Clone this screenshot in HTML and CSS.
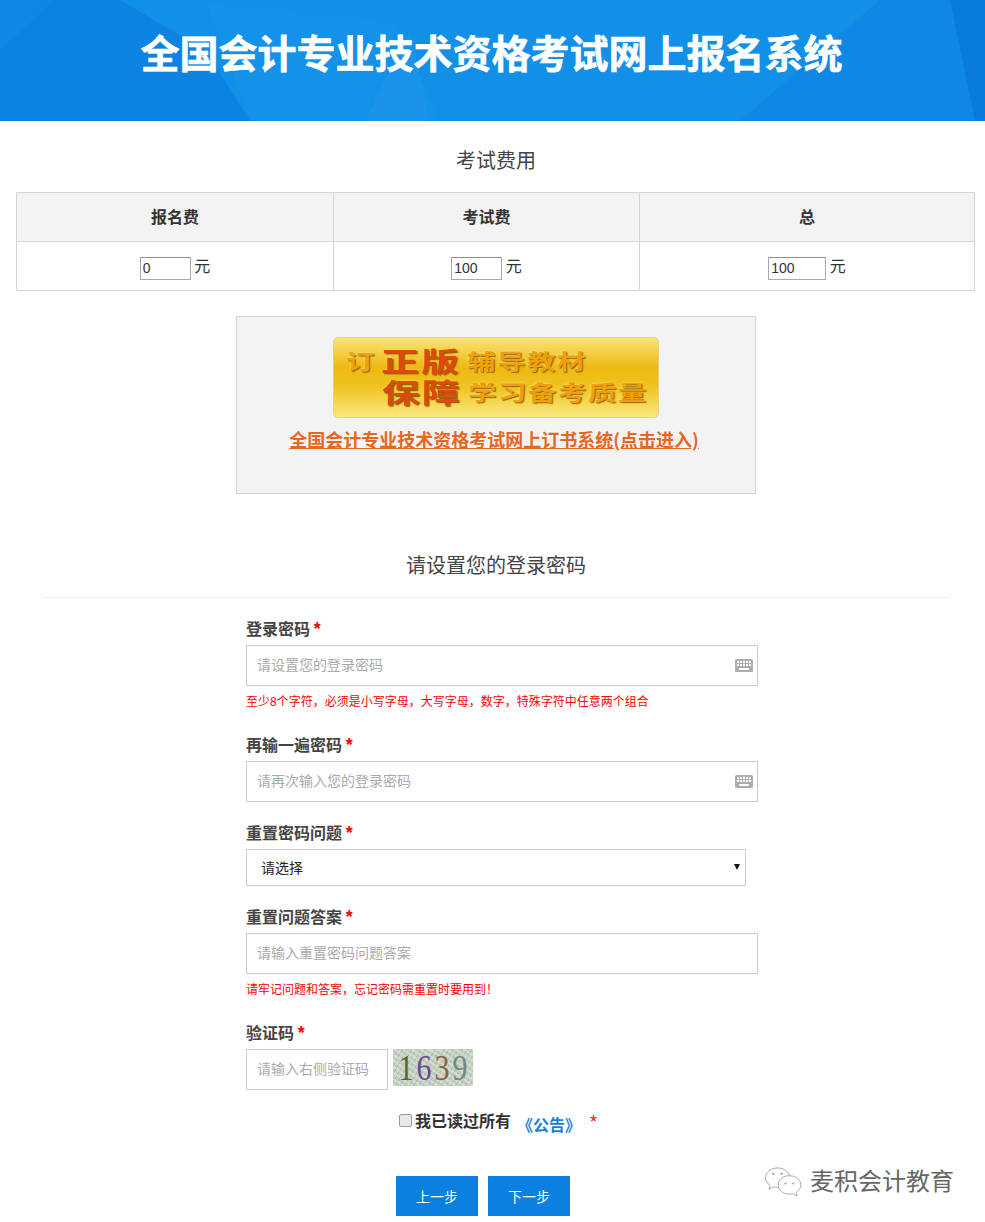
FILE: index.html
```html
<!DOCTYPE html>
<html lang="zh-CN">
<head>
<meta charset="utf-8">
<title>全国会计专业技术资格考试网上报名系统</title>
<link rel="stylesheet" href="styles.css">
</head>
<body>
<header class="banner">
  <svg class="banner-art" viewBox="0 0 985 121" preserveAspectRatio="none" aria-hidden="true">
    <polygon points="0,0 205,0 250,121 0,121" fill="#0c83e3"/>
    <polygon points="120,0 420,0 395,45 365,121 250,121 205,50" fill="#1190e8"/>
    <polygon points="205,0 395,20 440,121 250,121" fill="#1592e9" opacity=".7"/>
    <polygon points="365,121 410,30 430,121" fill="#2a9fee" opacity=".25"/>
    <polygon points="740,121 880,0 950,0 985,121" fill="#0f87e5"/>
    <polygon points="950,0 985,0 985,121 975,121" fill="#0a7bde"/>
    <polygon points="0,0 55,0 0,50" fill="#1a92e9" opacity=".25"/>
  </svg>
  <h1 class="banner-title">全国会计专业技术资格考试网上报名系统</h1>
</header>

<main>
  <h2 class="section-title fee-title">考试费用</h2>
  <table class="fee-table">
    <colgroup><col class="col-a"><col class="col-b"><col class="col-c"></colgroup>
    <thead>
      <tr><th>报名费</th><th>考试费</th><th>总</th></tr>
    </thead>
    <tbody>
      <tr>
        <td><input class="fee-input" type="text" value="0"> 元</td>
        <td><input class="fee-input" type="text" value="100"> 元</td>
        <td><input class="fee-input fee-wide" type="text" value="100"> 元</td>
      </tr>
    </tbody>
  </table>

  <section class="promo">
    <div class="promo-banner">
      <div class="promo-line"><span class="p-small p-first">订</span><span class="p-big">正版</span><span class="p-small">辅导教材</span></div>
      <div class="promo-line promo-line2"><span class="p-big">保障</span><span class="p-small">学习备考质量</span></div>
    </div>
    <a class="promo-link" href="#">全国会计专业技术资格考试网上订书系统(点击进入)</a>
  </section>

  <h2 class="section-title form-title">请设置您的登录密码</h2>
  <hr class="rule">

  <form class="form">
    <div class="field">
      <label class="label">登录密码 <span class="req">*</span></label>
      <div class="input-wrap">
        <input class="text-input" type="text" placeholder="请设置您的登录密码">
        <svg class="kbd" viewBox="0 0 18 13" aria-hidden="true"><rect width="18" height="13" rx="1.5" fill="#adadad"/><g fill="#fff"><rect x="2" y="2" width="2" height="2"/><rect x="5" y="2" width="2" height="2"/><rect x="8" y="2" width="2" height="2"/><rect x="11" y="2" width="2" height="2"/><rect x="14" y="2" width="2" height="2"/><rect x="2" y="5" width="2" height="2"/><rect x="5" y="5" width="2" height="2"/><rect x="8" y="5" width="2" height="2"/><rect x="11" y="5" width="2" height="2"/><rect x="14" y="5" width="2" height="2"/><rect x="4" y="9" width="10" height="2"/></g></svg>
      </div>
      <p class="hint">至少8个字符，必须是小写字母，大写字母，数字，特殊字符中任意两个组合</p>
    </div>
    <div class="field">
      <label class="label">再输一遍密码 <span class="req">*</span></label>
      <div class="input-wrap">
        <input class="text-input" type="text" placeholder="请再次输入您的登录密码">
        <svg class="kbd" viewBox="0 0 18 13" aria-hidden="true"><rect width="18" height="13" rx="1.5" fill="#adadad"/><g fill="#fff"><rect x="2" y="2" width="2" height="2"/><rect x="5" y="2" width="2" height="2"/><rect x="8" y="2" width="2" height="2"/><rect x="11" y="2" width="2" height="2"/><rect x="14" y="2" width="2" height="2"/><rect x="2" y="5" width="2" height="2"/><rect x="5" y="5" width="2" height="2"/><rect x="8" y="5" width="2" height="2"/><rect x="11" y="5" width="2" height="2"/><rect x="14" y="5" width="2" height="2"/><rect x="4" y="9" width="10" height="2"/></g></svg>
      </div>
    </div>
    <div class="field">
      <label class="label">重置密码问题 <span class="req">*</span></label>
      <div class="select-wrap">
        <select class="select"><option>请选择</option></select>
      </div>
    </div>
    <div class="field">
      <label class="label">重置问题答案 <span class="req">*</span></label>
      <div class="input-wrap">
        <input class="text-input" type="text" placeholder="请输入重置密码问题答案">
      </div>
      <p class="hint">请牢记问题和答案，忘记密码需重置时要用到！</p>
    </div>
    <div class="field">
      <label class="label">验证码 <span class="req">*</span></label>
      <div class="captcha-row">
        <input class="text-input captcha-input" type="text" placeholder="请输入右侧验证码">
        <div class="captcha"><span class="d1">1</span><span class="d2">6</span><span class="d3">3</span><span class="d4">9</span></div>
      </div>
    </div>
    <div class="agree">
      <input class="check" type="checkbox">
      <span class="agree-text">我已读过所有</span>
      <a class="notice" href="#">《公告》</a>
      <span class="req agree-req">*</span>
    </div>
    <div class="actions">
      <button class="btn" type="button">上一步</button>
      <button class="btn" type="button">下一步</button>
    </div>
  </form>
</main>

<div class="watermark">
  <svg class="wm-icon" viewBox="0 0 40 34" aria-hidden="true">
    <g fill="#fff" stroke="#a8a8a8" stroke-width="1">
      <path d="M14 2C7 2 1.500 6.500 1.500 12c0 3.200 1.800 6 4.700 7.900L5 24l4.800-2.500c1.400.4 2.800.5 4.200.5 6.900 0 12.500-4.500 12.500-10S20.900 2 14 2z"/>
      <path d="M26 10c-6.300 0-11.500 4.200-11.500 9.500S19.700 29 26 29c1.200 0 2.400-.2 3.500-.5L34 31l-1-3.900c3-1.800 5-4.500 5-7.600C38 14.200 32.300 10 26 10z"/>
    </g>
    <g fill="#a0a0a0"><circle cx="9.500" cy="8" r="1.200"/><circle cx="18" cy="8" r="1.200"/><circle cx="22" cy="18" r="1"/><circle cx="30" cy="18" r="1"/></g>
  </svg>
  <span class="wm-text">麦积会计教育</span>
</div>
</body>
</html>
```
FILE: styles.css
```css
* { box-sizing: border-box; }
html, body { margin: 0; padding: 0; }
body {
  font-family: "Noto Sans CJK SC", "Liberation Sans", sans-serif;
  color: #333;
  background: #fff;
  position: relative;
  height: 1222px;
  overflow: hidden;
}
.banner {
  position: relative;
  height: 121px;
  background: #1290e8;
  display: flex;
  align-items: center;
  justify-content: center;
  overflow: hidden;
}
.banner-art { position: absolute; inset: 0; width: 100%; height: 100%; }
.banner-title {
  position: relative;
  margin: 0 2px 20px 0;
  font-size: 39px;
  line-height: 50px;
  font-weight: 700;
  color: #fff;
  -webkit-text-stroke: .6px #fff;
  white-space: nowrap;
}
.section-title {
  margin: 0;
  padding-left: 7px;
  text-align: center;
  font-size: 20px;
  line-height: 30px;
  font-weight: 400;
  color: #444;
}
.fee-title { padding-top: 24px; }
.fee-table {
  margin: 17px 0 0 16px;
  width: 959px;
  table-layout: fixed;
  border-collapse: collapse;
  font-size: 16px;
}
.col-a { width: 317px; }
.col-b { width: 306px; }
.fee-table th, .fee-table td {
  border: 1px solid #d5d5d5;
  height: 49px;
  padding: 0;
  text-align: center;
  vertical-align: middle;
}
.fee-table th { background: #f3f3f3; font-size: 16px; font-weight: 700; padding-bottom: 2px; }
.fee-table td { padding-top: 1px; }
.fee-input {
  width: 51px;
  height: 23px;
  padding: 0 2px;
  border: 1px solid #aaa;
  border-top-color: #8f8f8f;
  font-family: "Liberation Sans", sans-serif;
  font-size: 14px;
  color: #333;
  vertical-align: middle;
}
.fee-wide { width: 58px; }
.promo {
  margin: 25px 0 0 236px;
  width: 520px;
  height: 178px;
  padding-top: 20px;
  border: 1px solid #d5d5d5;
  background: #f3f3f3;
  text-align: center;
}
.promo-banner {
  width: 326px;
  height: 81px;
  margin: 0 auto;
  padding: 7px 0 0 12px;
  border: 1px solid #e6d37a;
  border-radius: 5px;
  background: linear-gradient(180deg, #f8e47a 0%, #eeb80e 38%, #f0c421 62%, #fae882 100%);
  text-align: left;
}
.promo-line { display: flex; align-items: center; height: 31px; line-height: 31px; white-space: nowrap; }
.promo-line2 { padding-left: 36px; }
.p-small {
  display: block;
  font-size: 21px;
  font-weight: 700;
  letter-spacing: 1.2px;
  color: #f0a00a;
  text-shadow: 1px 1px 1px #8a6200, 0 0 2px #fff3a0;
  transform: scaleX(1.35);
  transform-origin: left center;
}
.p-first { width: 35px; }
.p-big {
  display: block;
  width: 80px;
  font-size: 27px;
  font-weight: 700;
  letter-spacing: 1.5px;
  color: #dc4a0c;
  text-shadow: 1px 1px 1px #7d5600, 0 0 2px #ffe060;
  transform: scaleX(1.4);
  transform-origin: left center;
  margin-right: 6px;
}
.promo-link {
  display: block;
  margin-top: 9px;
  padding-right: 4px;
  font-size: 18px;
  line-height: 24px;
  font-weight: 700;
  color: #e8661e;
  text-decoration: underline;
  white-space: nowrap;
}
.form-title { margin-top: 56px; }
.rule { margin: 17px 35px 0 42px; border: 0; border-top: 1px solid #eee; }
.form { margin: 19px 0 0 246px; width: 512px; }
.field { margin-bottom: 19px; }
.label {
  display: block;
  font-size: 16px;
  line-height: 22px;
  font-weight: 700;
  color: #444;
  margin-bottom: 6px;
}
.req {
  color: #f00;
  font-family: "Liberation Sans", sans-serif;
  font-size: 18px;
  line-height: 1;
}
.input-wrap { position: relative; }
.text-input {
  display: block;
  width: 512px;
  height: 41px;
  padding: 0 10px 3px;
  border: 1px solid #ccc;
  background: #fff;
  font-family: inherit;
  font-size: 14px;
  color: #333;
}
.text-input::placeholder { color: #aaa; opacity: 1; }
.kbd { position: absolute; right: 5px; top: 14px; width: 18px; height: 13px; }
.hint {
  margin: 6px 0 0;
  padding-bottom: 4px;
  font-size: 12px;
  line-height: 18px;
  color: #f00;
}
.select-wrap { position: relative; width: 500px; }
.select-wrap::after {
  content: "";
  position: absolute;
  right: 6px;
  top: 15px;
  border-left: 3.500px solid transparent;
  border-right: 3.500px solid transparent;
  border-top: 6px solid #111;
  pointer-events: none;
}
.select {
  display: block;
  width: 100%;
  height: 37px;
  padding: 0 14px 2px;
  border: 1px solid #ccc;
  border-radius: 0;
  background: #fff;
  appearance: none;
  font-family: inherit;
  font-size: 14px;
  color: #222;
}
.captcha-row { display: flex; align-items: flex-start; gap: 5px; }
.captcha-input { width: 142px; }
.captcha {
  width: 80px;
  height: 37px;
  display: flex;
  align-items: center;
  justify-content: center;
  gap: 3px;
  background:
    repeating-linear-gradient(35deg, rgba(255,255,255,.3) 0 2px, transparent 2px 5px),
    repeating-linear-gradient(120deg, rgba(130,150,125,.3) 0 1px, transparent 1px 4px),
    #c2d0c0;
  font-family: "Liberation Serif", serif;
  font-size: 30px;
  font-weight: 400;
  line-height: 34px;
}
.captcha span { display: block; transform: scaleY(1.2); }
.d1 { color: #55653a; }
.d2 { color: #6b4c8c; }
.d3 { color: #8a5f42; }
.d4 { color: #6e8a7f; }
.agree {
  display: flex;
  align-items: center;
  margin: 19px 0 0 153px;
  height: 22px;
  white-space: nowrap;
}
.check {
  appearance: none;
  width: 13px;
  height: 13px;
  margin: 0 3px 0 0;
  border: 1px solid #999;
  border-radius: 2px;
  background: #e9e9e9;
}
.agree-text { font-size: 16px; line-height: 22px; font-weight: 700; color: #333; }
.notice {
  margin: 8px 0 0 6px;
  font-size: 16px;
  line-height: 22px;
  font-weight: 700;
  color: #1c7fd6;
  text-decoration: none;
}
.agree-req { margin: 4px 0 0 9px; }
.actions { display: flex; gap: 10px; margin: 45px 0 0 150px; }
.btn {
  width: 82px;
  height: 40px;
  padding: 0;
  border: 0;
  background: #0b80e0;
  color: #fff;
  font-family: inherit;
  font-size: 14px;
}
.watermark {
  position: absolute;
  left: 764px;
  top: 1161px;
  display: flex;
  align-items: center;
  gap: 7px;
}
.wm-icon { width: 39px; height: 33px; margin-top: 5px; }
.wm-text {
  font-size: 24px;
  line-height: 32px;
  color: #666;
  text-shadow: 1px 1px 0 #fff;
  white-space: nowrap;
}
```
